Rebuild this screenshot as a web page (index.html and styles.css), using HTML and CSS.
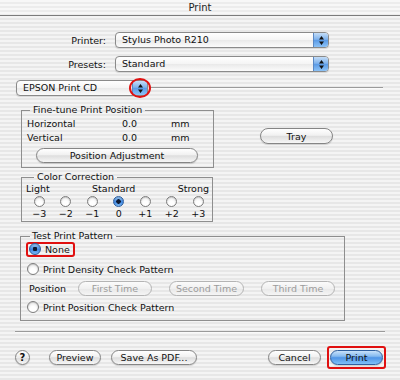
FILE: index.html
```html
<!DOCTYPE html>
<html lang="en">
<head>
  <meta charset="UTF-8" />
  <title>Print</title>
  <link rel="stylesheet" href="styles.css">
</head>
<body>
  <div class="window">
    <div class="titlebar">Print</div>

    <div class="content">
      <div class="form-row">
        <label class="form-label">Printer:</label>
        <div class="popup popup-wide">
          <span class="popup-text">Stylus Photo R210</span>
          <span class="popup-arrows"><svg width="7" height="11" viewBox="0 0 7 11"><path d="M3.5 1 L6 4.5 L1 4.5 Z M1 6.5 L6 6.5 L3.5 10 Z" fill="#111"/></svg></span>
        </div>
      </div>
      <div class="form-row">
        <label class="form-label">Presets:</label>
        <div class="popup popup-wide">
          <span class="popup-text">Standard</span>
          <span class="popup-arrows"><svg width="7" height="11" viewBox="0 0 7 11"><path d="M3.5 1 L6 4.5 L1 4.5 Z M1 6.5 L6 6.5 L3.5 10 Z" fill="#111"/></svg></span>
        </div>
      </div>

      <div class="pane-row">
        <div class="popup popup-pane">
          <span class="popup-text">EPSON Print CD</span>
          <span class="popup-arrows"><svg width="7" height="11" viewBox="0 0 7 11"><path d="M3.5 1 L6 4.5 L1 4.5 Z M1 6.5 L6 6.5 L3.5 10 Z" fill="#111"/></svg></span>
          <span class="mark-ring"></span>
        </div>
        <div class="pane-line"></div>
      </div>

      <div class="panel">
        <div class="panel-left">
          <fieldset class="group group-fine">
            <legend>Fine-tune Print Position</legend>
            <div class="pos-grid">
              <span>Horizontal</span><span>0.0</span><span>mm</span>
              <span>Vertical</span><span>0.0</span><span>mm</span>
            </div>
            <button class="btn btn-adjust">Position Adjustment</button>
          </fieldset>

          <fieldset class="group group-color">
            <legend>Color Correction</legend>
            <div class="scale-labels">
              <span>Light</span><span>Standard</span><span>Strong</span>
            </div>
            <div class="scale">
              <span class="radio"></span>
              <span class="radio"></span>
              <span class="radio"></span>
              <span class="radio checked"></span>
              <span class="radio"></span>
              <span class="radio"></span>
              <span class="radio"></span>
              <span>&minus;3</span><span>&minus;2</span><span>&minus;1</span><span>0</span>
              <span>+1</span><span>+2</span><span>+3</span>
            </div>
          </fieldset>
        </div>
        <div class="panel-right">
          <button class="btn btn-tray">Tray</button>
        </div>
      </div>

      <fieldset class="group group-test">
        <legend>Test Print Pattern</legend>
        <div class="option option-first">
          <span class="mark-box"><span class="radio radio-lg checked"></span>None</span>
        </div>
        <div class="option option-density">
          <span class="radio radio-lg"></span>Print Density Check Pattern
        </div>
        <div class="position-row">
          <span class="position-label">Position</span>
          <button class="btn btn-off btn-first">First Time</button>
          <button class="btn btn-off btn-second">Second Time</button>
          <button class="btn btn-off btn-third">Third Time</button>
        </div>
        <div class="option option-pos">
          <span class="radio radio-lg"></span>Print Position Check Pattern
        </div>
      </fieldset>

      <div class="separator"></div>

      <div class="actions">
        <span class="help">?</span>
        <button class="btn btn-preview">Preview</button>
        <button class="btn btn-pdf">Save As PDF...</button>
        <div class="spacer"></div>
        <button class="btn btn-cancel">Cancel</button>
        <span class="print-mark"><button class="btn btn-default">Print</button></span>
      </div>
    </div>
  </div>
</body>
</html>
```

FILE: styles.css
```css
* {
  box-sizing: border-box;
}

body {
  margin: 0;
  font-family: "DejaVu Sans", "Liberation Sans", sans-serif;
  font-size: 9.5px;
  color: #111;
}

.window {
  width: 400px;
  height: 380px;
  overflow: hidden;
  background: repeating-linear-gradient(#f4f4f4 0 2px, #e7e7e7 2px 4px);
}

.titlebar {
  height: 16px;
  line-height: 15px;
  text-align: center;
  font-size: 10px;
  color: #222;
  border-bottom: 1px solid #7c7c7c;
  background: repeating-linear-gradient(#f7f7f7 0 2px, #ececec 2px 4px);
}

.content {
  padding: 16px 15px 0;
}

/* popups */
.form-row {
  display: flex;
  align-items: center;
  margin-bottom: 8px;
}

.form-label {
  width: 91px;
  text-align: right;
  margin-right: 9px;
}

.popup {
  position: relative;
  display: flex;
  align-items: stretch;
  height: 16px;
  border: 1px solid #8a8a8a;
  border-radius: 4px;
  background: linear-gradient(#ffffff, #f4f4f4 50%, #e9e9e9 51%, #fbfbfb);
  box-shadow: 0 1px 1px rgba(0, 0, 0, 0.12);
}

.popup-wide {
  width: 214px;
}

.popup-text {
  flex: 1;
  padding-left: 6px;
  line-height: 14px;
}

.popup-arrows {
  width: 15px;
  display: flex;
  align-items: center;
  justify-content: center;
  border-left: 1px solid #5a88c4;
  border-radius: 0 3px 3px 0;
  background: linear-gradient(#c4ddf7, #7fb2ec 45%, #5b9be6 52%, #8cc2f6);
}

.pane-row {
  display: flex;
  align-items: center;
  margin-left: 1px;
}

.popup-pane {
  width: 132px;
}

.mark-ring {
  position: absolute;
  right: -4px;
  top: -3px;
  width: 22px;
  height: 20px;
  border: 2px solid #e01010;
  border-radius: 50%;
}

.pane-line {
  flex: 1;
  height: 2px;
  margin-left: 2px;
  margin-right: 2px;
  border-top: 1px solid #9a9a9a;
  border-bottom: 1px solid #fafafa;
}

/* group boxes */
.group {
  margin: 0;
  padding: 0;
  border: 1px solid #8e8e8e;
  min-width: 0;
}

.group legend {
  padding: 0 3px;
  line-height: 12px;
}

.panel {
  display: flex;
  margin-top: 8px;
  margin-left: 6px;
}

.panel-left {
  width: 193px;
}

.panel-right {
  padding-top: 24px;
  padding-left: 46px;
}

.group-fine {
  padding: 1px 0 4px 5px;
}

.group-fine legend {
  margin-left: 3px;
}

.pos-grid {
  display: grid;
  grid-template-columns: 95px 49px auto;
  line-height: 14px;
}

.group-color {
  width: 192px;
  margin-top: 3px;
  padding: 0 0 2px 4px;
}

.group-color legend {
  margin-left: 8px;
}

.scale-labels {
  display: flex;
  justify-content: space-between;
  width: 183px;
  line-height: 11px;
}

.scale {
  display: grid;
  grid-template-columns: repeat(7, 26.5px);
  justify-items: center;
  align-items: center;
  row-gap: 1px;
  margin-top: 2px;
  line-height: 11px;
}

.group-test {
  width: 325px;
  margin-top: 8px;
  margin-left: 5px;
  padding: 0 0 6px 6px;
}

.group-test legend {
  margin-left: 3px;
  padding-left: 2px;
}

/* radios */
.radio {
  display: inline-block;
  width: 11px;
  height: 11px;
  border-radius: 50%;
  border: 1px solid #7d7d7d;
  background: radial-gradient(circle at 50% 70%, #ffffff 30%, #e4e4e4 90%);
  box-shadow: inset 0 1px 1px rgba(0, 0, 0, 0.15);
}

.radio.checked {
  border-color: #2c5d9e;
  background: radial-gradient(circle, #0d1a33 0 2px, transparent 2.5px), linear-gradient(#9ccaf5, #3f86e0 55%, #7ab8f4);
}

.radio-lg {
  width: 12px;
  height: 12px;
  margin-right: 4px;
}

.option {
  display: flex;
  align-items: center;
  height: 14px;
}

.option-first {
  margin-left: -1px;
}

.mark-box {
  display: flex;
  align-items: center;
  height: 15px;
  padding: 0 3px 0 1px;
  border: 2px solid #e01010;
  border-radius: 3px;
}

.option-density {
  margin-top: 6px;
}

.option-pos {
  margin-top: 4px;
}

.position-row {
  display: flex;
  align-items: center;
  margin-top: 5px;
  height: 15px;
}

.position-label {
  width: 51px;
  padding-left: 2px;
}

/* buttons */
.btn {
  height: 15px;
  padding: 0;
  font-family: "DejaVu Sans", "Liberation Sans", sans-serif;
  font-size: 9.5px;
  line-height: 13px;
  color: #111;
  border: 1px solid #858585;
  border-radius: 8px;
  background: linear-gradient(#ffffff, #f1f1f1 45%, #dedede 52%, #f6f6f6);
  box-shadow: 0 1px 1px rgba(0, 0, 0, 0.15);
}

.btn-adjust {
  width: 162px;
  margin-top: 3px;
  margin-left: 9px;
}

.btn-tray {
  width: 73px;
  height: 16px;
}

.btn-off {
  color: #9c9c9c;
  border-color: #b4b4b4;
  background: linear-gradient(#fbfbfb, #f0f0f0 50%, #e8e8e8 52%, #f5f5f5);
  box-shadow: none;
}

.btn-first {
  width: 74px;
}

.btn-second {
  width: 75px;
  margin-left: 17px;
}

.btn-third {
  width: 74px;
  margin-left: 17px;
}

.separator {
  margin-top: 10px;
  height: 2px;
  border-top: 1px solid #9a9a9a;
  border-bottom: 1px solid #fafafa;
}

.actions {
  display: flex;
  align-items: center;
  margin-top: 16px;
  height: 16px;
}

.help {
  width: 15px;
  height: 15px;
  border-radius: 50%;
  border: 1px solid #858585;
  background: linear-gradient(#ffffff, #ececec 50%, #dcdcdc 52%, #f7f7f7);
  text-align: center;
  line-height: 13px;
  font-size: 10px;
  font-weight: bold;
  box-shadow: 0 1px 1px rgba(0, 0, 0, 0.15);
}

.btn-preview {
  width: 52px;
  margin-left: 19px;
}

.btn-pdf {
  width: 86px;
  margin-left: 10px;
}

.spacer {
  flex: 1;
}

.btn-cancel {
  width: 53px;
}

.print-mark {
  display: flex;
  margin-left: 6px;
  margin-right: -1px;
  padding: 2px 1px;
  border: 2px solid #e01010;
  border-radius: 3px;
}

.btn-default {
  width: 53px;
  border-color: #2f5f9e;
  background: linear-gradient(#c9e2fa, #86bbf0 40%, #4f94e6 52%, #7fc0f8);
}
```
